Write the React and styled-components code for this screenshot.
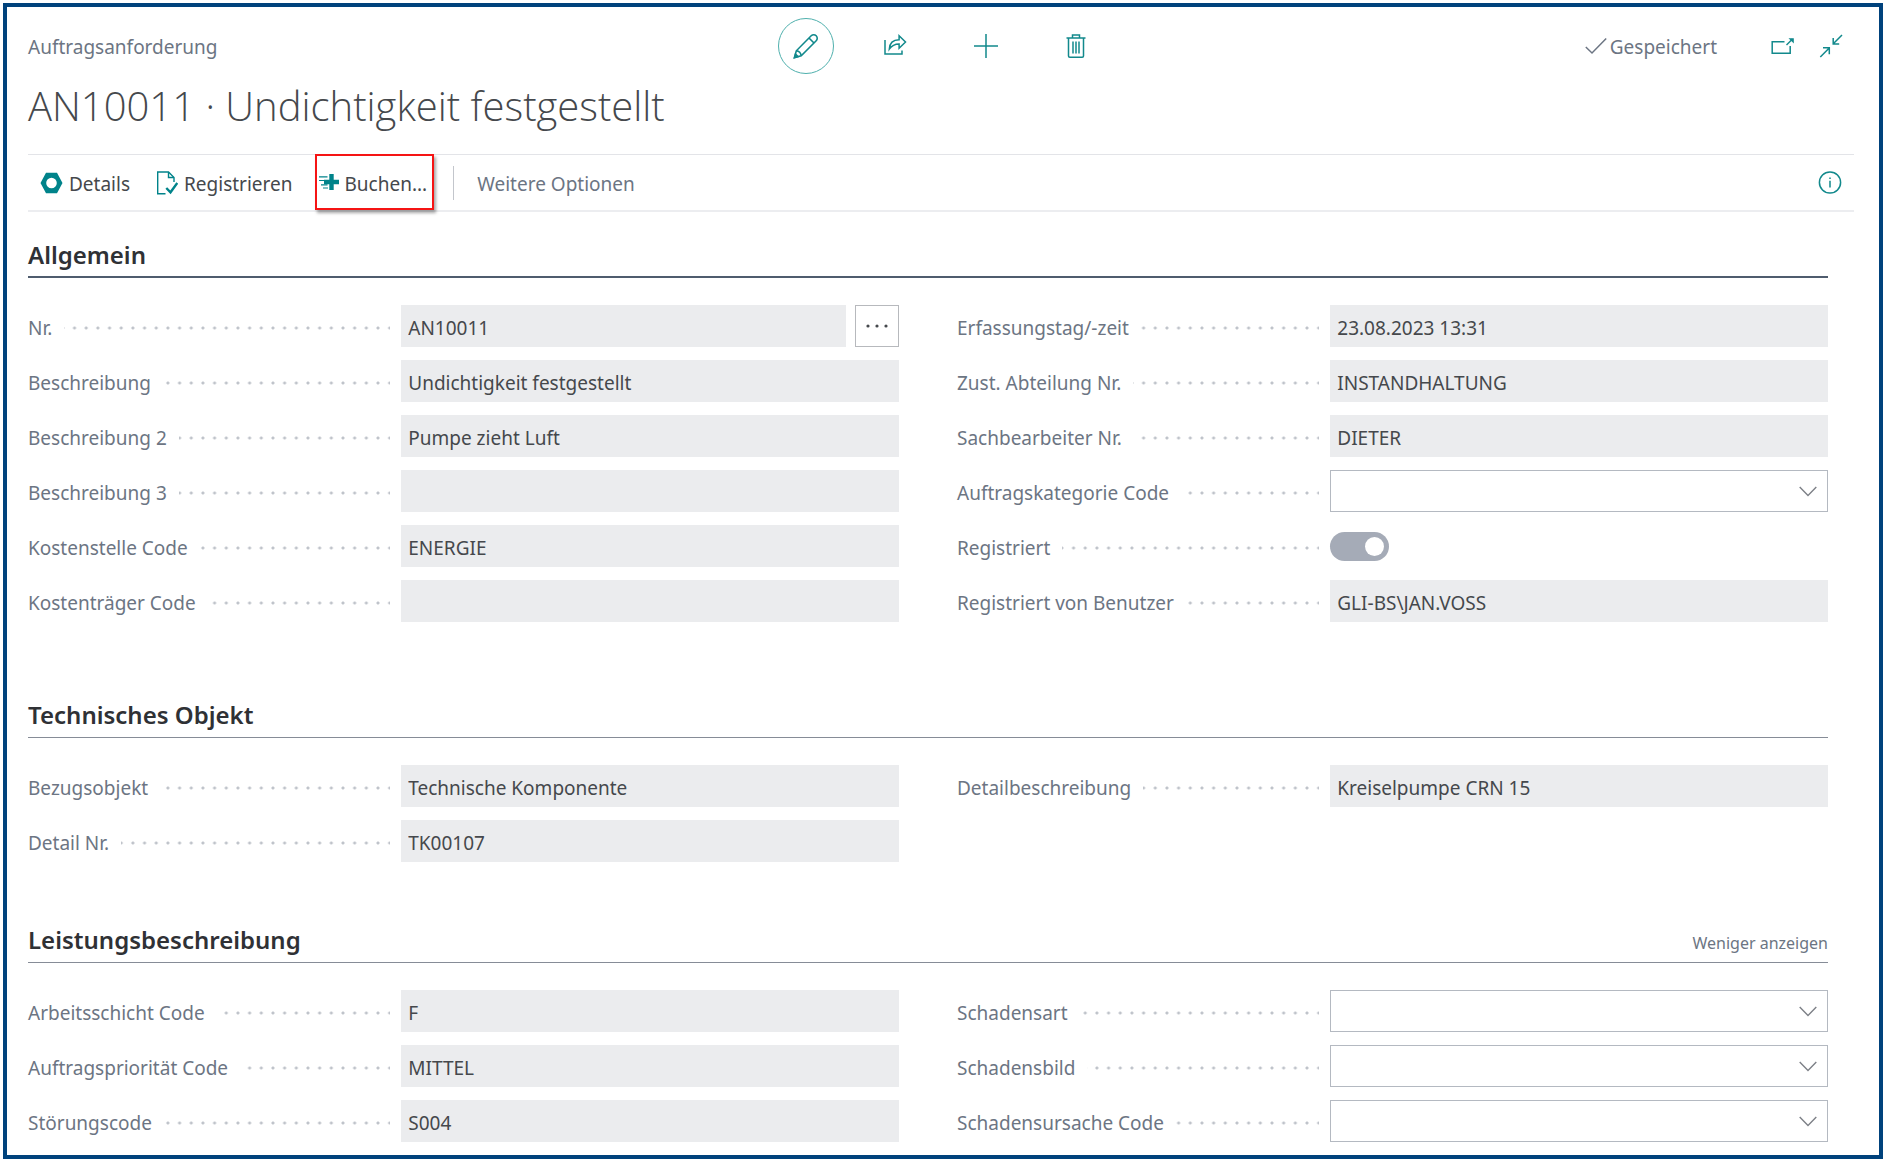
import React, { useState } from 'react';
import styled, { createGlobalStyle } from 'styled-components';

const GlobalStyle = createGlobalStyle`
  :root {
    --teal: #12898c;
    --teal-dark: #00838a;
    --text-primary: #45484c;
    --text-secondary: #6c7583;
    --heading: #2f3135;
    --field-bg: #ebecee;
    --field-border: #b4b9c1;
    --frame: #00427c;
  }

  * { box-sizing: border-box; }

  body {
    margin: 0;
    background-color: #fff;
    color: var(--text-primary);
    font-family: 'Noto Sans', 'Open Sans', sans-serif;
    font-size: 19px;
    line-height: 26px;
  }

  button, input, select {
    font: inherit;
    color: inherit;
  }
`;

const Page = styled.div`
  min-height: 100vh;
  padding: 3px 2px 2px 3px;
  display: flex;
`;

const Card = styled.main`
  flex: 1;
  border: 4px solid var(--frame);
  padding: 11px 25px 12px 21px;
`;

const TopBar = styled.header`
  display: grid;
  grid-template-columns: 1fr auto 1fr;
  align-items: center;
`;

const PageType = styled.span`
  padding-top: 2px;
  color: var(--text-secondary);
`;

const Commands = styled.div`
  display: flex;
  gap: 34px;
`;

const IconButton = styled.button`
  width: ${props => props.$small ? '24px' : '56px'};
  height: ${props => props.$small ? '24px' : '56px'};
  padding: 0;
  display: flex;
  align-items: center;
  justify-content: center;
  background: none;
  border: ${props => props.$circled ? '1px solid #4fb0ad' : 'none'};
  border-radius: 50%;
  color: var(--teal);
  cursor: pointer;
`;

const Status = styled.div`
  justify-self: end;
  display: flex;
  align-items: center;
  padding-right: 11px;
  color: var(--text-secondary);
`;

const SavedText = styled.span`
  margin: 0 54px 0 3px;
  padding-top: 2px;
`;

const WindowButtons = styled.div`
  display: flex;
  gap: 24px;
`;

const Title = styled.h1`
  margin: 0 0 16px;
  font-family: 'Open Sans', sans-serif;
  font-size: 40px;
  font-weight: 300;
  line-height: 64px;
`;

const ActionBar = styled.nav`
  height: 58px;
  padding: 0 12px;
  display: flex;
  align-items: center;
  border-top: 1px solid #e3e4e8;
  border-bottom: 2px solid #ecedf0;
`;

const Action = styled.button`
  position: relative;
  height: 40px;
  margin-right: 26px;
  padding: 0;
  display: flex;
  align-items: center;
  gap: 6px;
  background: none;
  border: none;
  color: ${props => props.$muted ? 'var(--text-secondary)' : 'var(--text-primary)'};
  cursor: pointer;

  svg { color: var(--teal-dark); }
`;

const ActionText = styled.span`
  padding-top: 2px;
`;

const Highlight = styled.span`
  position: absolute;
  inset: -9px -7px -7px -4px;
  border: 2px solid #f51414;
  box-shadow: 2px 3px 3px rgba(0, 0, 0, 0.35);
  pointer-events: none;
`;

const Divider = styled.span`
  width: 1px;
  height: 34px;
  margin-right: 23px;
  background-color: #c3c6cc;
`;

const InfoSlot = styled.div`
  margin-left: auto;
`;

const Section = styled.section`
  margin-right: 26px;
  padding-top: ${props => props.$gap}px;
`;

const SectionHeader = styled.div`
  height: 39px;
  display: flex;
  align-items: baseline;
  justify-content: space-between;
  border-bottom: ${props => props.$active ? '2px solid #4f5c6e' : '1px solid #868c97'};
`;

const SectionTitle = styled.h2`
  margin: 0;
  font-size: 24px;
  font-weight: 600;
  line-height: 32px;
  color: var(--heading);
`;

const ShowLess = styled.button`
  padding: 0;
  background: none;
  border: none;
  font-size: 16px;
  color: var(--text-secondary);
  cursor: pointer;
`;

const Columns = styled.div`
  display: grid;
  grid-template-columns: 1fr 1fr;
  column-gap: 58px;
  padding-top: 27px;
`;

const Column = styled.div`
  display: flex;
  flex-direction: column;
  gap: 13px;
`;

const Row = styled.div`
  height: 42px;
  display: grid;
  grid-template-columns: 3fr 4fr;
  align-items: center;
`;

/* dotted leader runs under the label up to the field */
const Leader = styled.div`
  height: 42px;
  margin-right: 11px;
  padding-top: 3px;
  display: flex;
  align-items: center;
  background-image: radial-gradient(circle, #bfc3ca 1px, transparent 2px);
  background-size: calc(100% / 31) 4px;
  background-position: -6px 21px;
  background-repeat: repeat-x;
`;

const Label = styled.label`
  padding-right: 12px;
  background-color: #fff;
  color: var(--text-secondary);
  white-space: nowrap;
`;

const Control = styled.div`
  display: flex;
  gap: 9px;
  align-items: center;
  min-width: 0;
`;

const ReadOnlyInput = styled.input`
  flex: 1;
  min-width: 0;
  height: 42px;
  padding: 3px 7px 0;
  background-color: var(--field-bg);
  border: none;
  border-radius: 0;
  outline: none;
`;

const AssistButton = styled.button`
  width: 44px;
  height: 42px;
  padding: 0;
  display: flex;
  align-items: center;
  justify-content: center;
  background-color: #fff;
  border: 1px solid #b7b9bd;
  cursor: pointer;
`;

const SelectWrapper = styled.div`
  flex: 1;
  display: grid;
  align-items: center;

  & > * { grid-area: 1 / 1; }

  svg {
    justify-self: end;
    margin-right: 11px;
    color: #7d8087;
    pointer-events: none;
  }
`;

const Select = styled.select`
  width: 100%;
  height: 42px;
  padding: 0 7px;
  appearance: none;
  background-color: #fff;
  border: 1px solid var(--field-border);
  border-radius: 0;
`;

const Switch = styled.input`
  appearance: none;
  width: 59px;
  height: 29px;
  margin: 0;
  padding: 5px;
  display: flex;
  justify-content: ${props => props.checked ? 'flex-end' : 'flex-start'};
  background-color: #a5abb7;
  border-radius: 15px;

  &::before {
    content: '';
    width: 19px;
    height: 19px;
    border-radius: 50%;
    background-color: #fff;
  }
`;

const Svg = ({ w = 24, h = 24, sw = 1.5, children }) => (
    <svg width={w} height={h} viewBox={`0 0 ${w} ${h}`} fill="none" stroke="currentColor" strokeWidth={sw} aria-hidden="true">
        {children}
    </svg>
);

const PencilIcon = () => (
    <Svg w={26} h={26} sw={1.6}>
        <path d="M1.5 24.5 L3.3 17.8 L18.2 2.8 A3.4 3.4 0 0 1 23.2 7.8 L8.2 22.7 Z" />
        <path d="M3.3 17.8 Q7.6 18.4 8.2 22.7 M16 5 L21 10" />
        <path d="M1.5 24.5 L2.5 21 L5 23.5 Z" fill="currentColor" />
    </Svg>
);

const ShareIcon = () => (
    <Svg>
        <path d="M1 6 V20 H18 V16.5" />
        <path d="M5.3 15.2 C5.6 9.5 8.8 5.8 15.1 5.8 V1.8 L21.5 8 L15.1 14.2 V10 C10.8 10 7.8 11.5 5.3 15.2 Z" />
    </Svg>
);

const PlusIcon = () => (
    <Svg>
        <path d="M12 0 V24 M0 12 H24" />
    </Svg>
);

const TrashIcon = () => (
    <Svg w={20}>
        <path d="M0.5 4 H19.5 M6.5 4 V1 H13.5 V4 M2.5 4 V22 Q2.5 23.2 3.8 23.2 H16.2 Q17.5 23.2 17.5 22 V4" />
        <path d="M7 7.5 V19.5 M10 7.5 V19.5 M13 7.5 V19.5" />
    </Svg>
);

const CheckIcon = () => (
    <Svg w={22} h={18}>
        <path d="M0.8 10 L7 16 L21.2 1.5" />
    </Svg>
);

const PopOutIcon = () => (
    <Svg h={18}>
        <path d="M13.5 4.7 H1.2 V16.2 H19.2 V9" />
        <path d="M15.5 8 L21.5 2" />
        <path d="M17.5 1.2 H22.8 V6.5 Z" fill="currentColor" stroke="none" />
    </Svg>
);

const ShrinkIcon = () => (
    <Svg>
        <path d="M1.3 23 L10 14.3 M4 13.8 H10.3 V20.2" />
        <path d="M23 1 L14.5 9.5 M14.2 4 V10 H20.2" />
    </Svg>
);

const NutIcon = () => (
    <Svg w={23} h={22}>
        <path d="M6 0.7 H17 L22.5 11 L17 21.3 H6 L0.5 11 Z M11.5 5.7 A5.3 5.3 0 1 0 11.5 16.3 A5.3 5.3 0 1 0 11.5 5.7 Z" fill="currentColor" fillRule="evenodd" stroke="none" />
    </Svg>
);

const RegisterIcon = () => (
    <Svg w={22} sw={1.4}>
        <path d="M9.5 22.7 H1.7 V1 H12.5 L18 6.5 V11" />
        <path d="M12.5 1 V6.5 H18" />
        <path d="M10.3 17 L14.5 21.3 L21.3 12" strokeWidth="2.4" />
    </Svg>
);

const PostIcon = () => (
    <Svg w={20} h={20}>
        <path d="M12.5 1 V17 M5 9 H20" strokeWidth="4.4" />
        <path d="M0 3.8 H8.5 M0 7.5 H5 M2 11.8 H8.5 M4 15 H9" strokeWidth="1.2" />
    </Svg>
);

const InfoIcon = () => (
    <Svg>
        <circle cx="12" cy="11.5" r="10.6" />
        <path d="M12 9.8 V16.5 M12 6.4 V8.1" />
    </Svg>
);

const DotsIcon = () => (
    <svg width="22" height="4" viewBox="0 0 22 4" fill="currentColor" aria-hidden="true">
        <circle cx="2" cy="2" r="1.6" />
        <circle cx="11" cy="2" r="1.6" />
        <circle cx="20" cy="2" r="1.6" />
    </svg>
);

const ChevronIcon = () => (
    <Svg w={18} h={11} sw={1.4}>
        <path d="M0.7 1 L9 9.6 L17.3 1" />
    </Svg>
);

const sections = [
    {
        title: 'Allgemein',
        gap: 27,
        active: true,
        columns: [
            [
                { id: 'nr', label: 'Nr.', value: 'AN10011', assist: true },
                { id: 'beschreibung', label: 'Beschreibung', value: 'Undichtigkeit festgestellt' },
                { id: 'beschreibung2', label: 'Beschreibung 2', value: 'Pumpe zieht Luft' },
                { id: 'beschreibung3', label: 'Beschreibung 3', value: '' },
                { id: 'kostenstelle', label: 'Kostenstelle Code', value: 'ENERGIE' },
                { id: 'kostentraeger', label: 'Kostenträger Code', value: '' },
            ],
            [
                { id: 'erfassung', label: 'Erfassungstag/-zeit', value: '23.08.2023 13:31' },
                { id: 'abteilung', label: 'Zust. Abteilung Nr.', value: 'INSTANDHALTUNG' },
                { id: 'sachbearbeiter', label: 'Sachbearbeiter Nr.', value: 'DIETER' },
                { id: 'kategorie', label: 'Auftragskategorie Code', type: 'select' },
                { id: 'registriert', label: 'Registriert', type: 'switch' },
                { id: 'benutzer', label: 'Registriert von Benutzer', value: 'GLI-BS\\JAN.VOSS' },
            ],
        ],
    },
    {
        title: 'Technisches Objekt',
        gap: 77,
        columns: [
            [
                { id: 'bezugsobjekt', label: 'Bezugsobjekt', value: 'Technische Komponente' },
                { id: 'detailnr', label: 'Detail Nr.', value: 'TK00107' },
            ],
            [
                { id: 'detailbeschreibung', label: 'Detailbeschreibung', value: 'Kreiselpumpe CRN 15' },
            ],
        ],
    },
    {
        title: 'Leistungsbeschreibung',
        gap: 62,
        showLess: true,
        columns: [
            [
                { id: 'arbeitsschicht', label: 'Arbeitsschicht Code', value: 'F' },
                { id: 'prioritaet', label: 'Auftragspriorität Code', value: 'MITTEL' },
                { id: 'stoerungscode', label: 'Störungscode', value: 'S004' },
            ],
            [
                { id: 'schadensart', label: 'Schadensart', type: 'select' },
                { id: 'schadensbild', label: 'Schadensbild', type: 'select' },
                { id: 'schadensursache', label: 'Schadensursache Code', type: 'select' },
            ],
        ],
    },
];

function Field({ field }) {
    const [registered, setRegistered] = useState(true);

    return (
        <Row>
            <Leader>
                <Label htmlFor={field.id}>{field.label}</Label>
            </Leader>
            <Control>
                {field.type === 'select' && (
                    <SelectWrapper>
                        <Select id={field.id}>
                            <option value=""></option>
                        </Select>
                        <ChevronIcon />
                    </SelectWrapper>
                )}
                {field.type === 'switch' && (
                    <Switch
                        id={field.id}
                        type="checkbox"
                        role="switch"
                        checked={registered}
                        onChange={e => setRegistered(e.target.checked)}
                    />
                )}
                {!field.type && <ReadOnlyInput id={field.id} type="text" value={field.value} readOnly />}
                {field.assist && <AssistButton aria-label="Nummer auswählen"><DotsIcon /></AssistButton>}
            </Control>
        </Row>
    );
}

function App() {
    return (
        <Page>
            <GlobalStyle />
            <Card>
                <TopBar>
                    <PageType>Auftragsanforderung</PageType>
                    <Commands>
                        <IconButton $circled aria-label="Bearbeiten"><PencilIcon /></IconButton>
                        <IconButton aria-label="Teilen"><ShareIcon /></IconButton>
                        <IconButton aria-label="Neu"><PlusIcon /></IconButton>
                        <IconButton aria-label="Löschen"><TrashIcon /></IconButton>
                    </Commands>
                    <Status>
                        <CheckIcon />
                        <SavedText>Gespeichert</SavedText>
                        <WindowButtons>
                            <IconButton $small aria-label="In neuem Fenster öffnen"><PopOutIcon /></IconButton>
                            <IconButton $small aria-label="Verkleinern"><ShrinkIcon /></IconButton>
                        </WindowButtons>
                    </Status>
                </TopBar>
                <Title>AN10011 · Undichtigkeit festgestellt</Title>
                <ActionBar>
                    <Action><NutIcon /><ActionText>Details</ActionText></Action>
                    <Action><RegisterIcon /><ActionText>Registrieren</ActionText></Action>
                    <Action><PostIcon /><ActionText>Buchen...</ActionText><Highlight /></Action>
                    <Divider />
                    <Action $muted><ActionText>Weitere Optionen</ActionText></Action>
                    <InfoSlot>
                        <IconButton $small aria-label="Info"><InfoIcon /></IconButton>
                    </InfoSlot>
                </ActionBar>
                {sections.map(section => (
                    <Section key={section.title} $gap={section.gap}>
                        <SectionHeader $active={section.active}>
                            <SectionTitle>{section.title}</SectionTitle>
                            {section.showLess && <ShowLess>Weniger anzeigen</ShowLess>}
                        </SectionHeader>
                        <Columns>
                            {section.columns.map((fields, index) => (
                                <Column key={index}>
                                    {fields.map(field => <Field key={field.id} field={field} />)}
                                </Column>
                            ))}
                        </Columns>
                    </Section>
                ))}
            </Card>
        </Page>
    );
}

export default App;
